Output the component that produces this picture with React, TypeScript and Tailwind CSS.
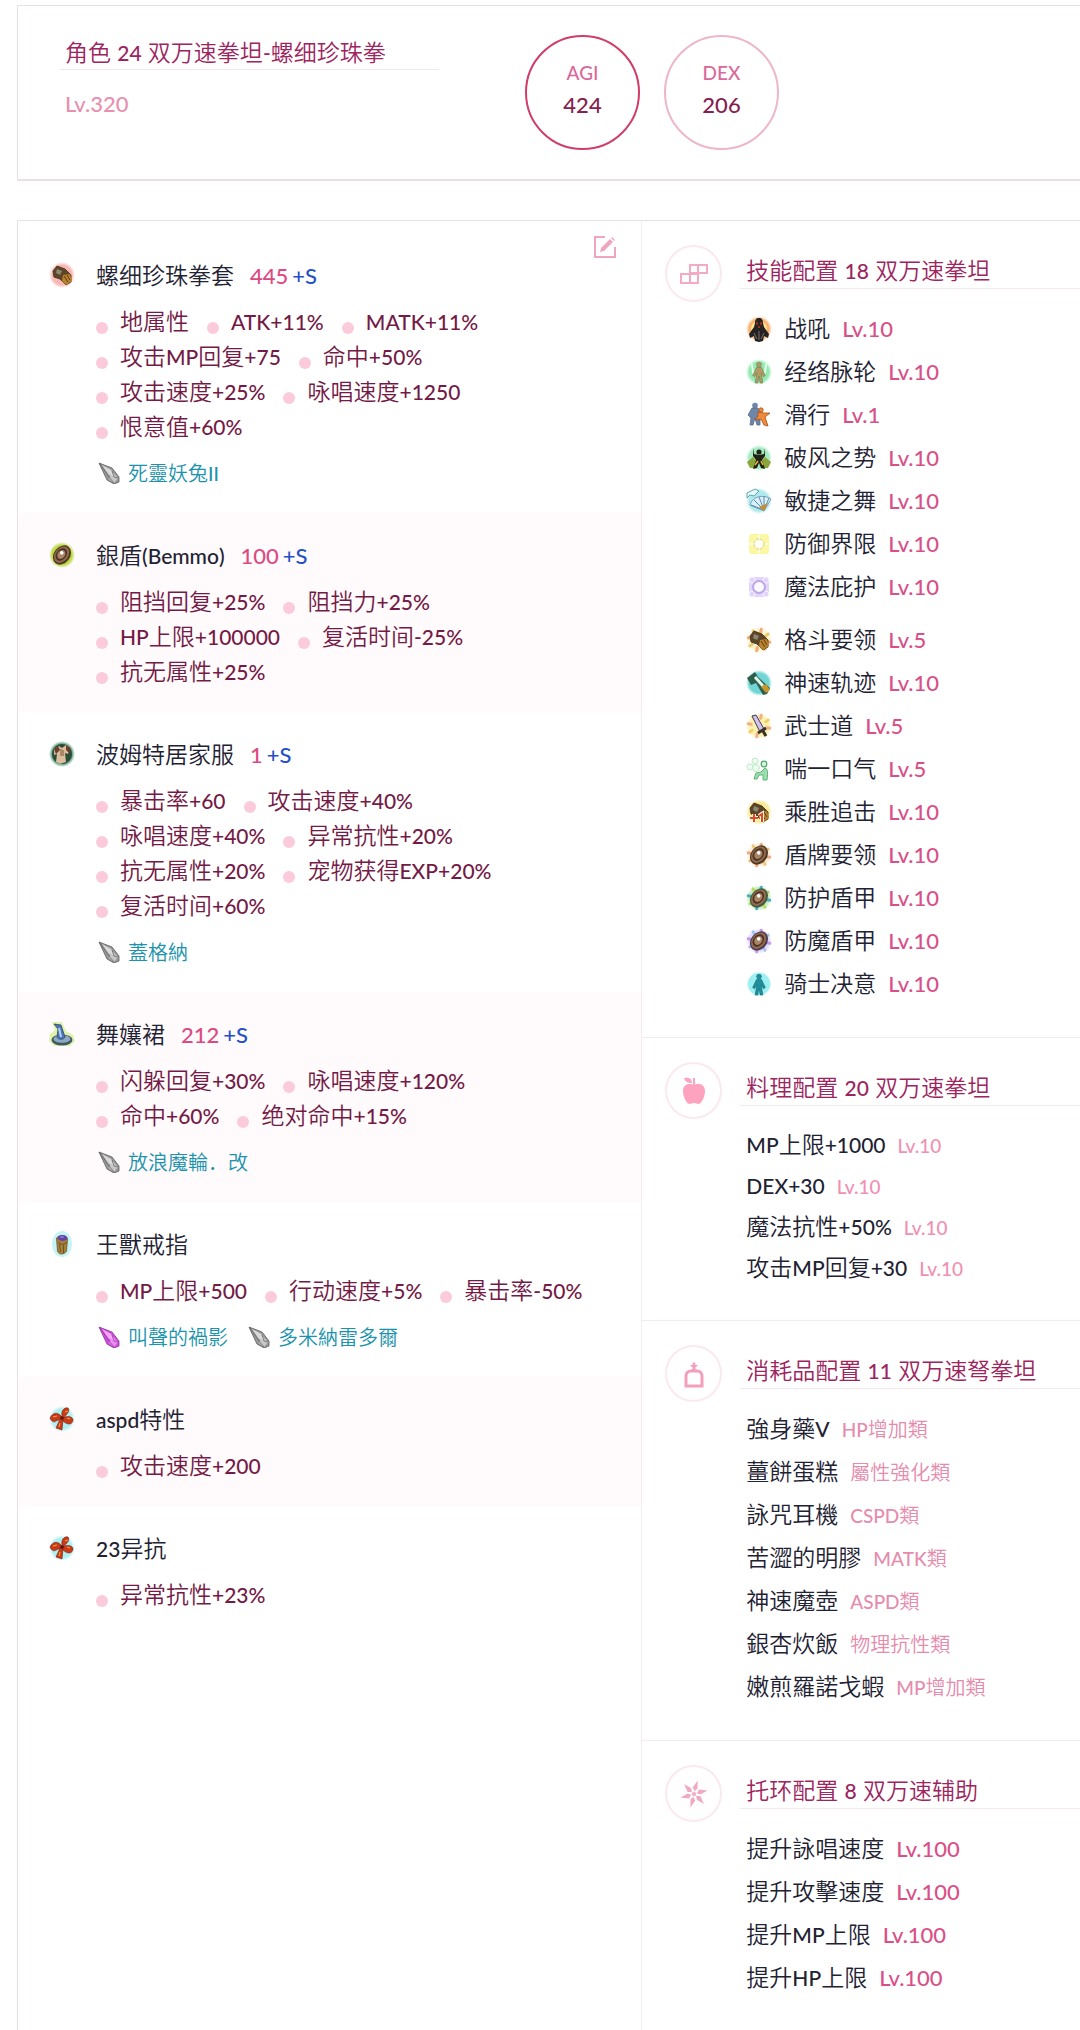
import { Fragment, useId, type ReactNode } from 'react'

type Stat = { label: string; value: number; main?: boolean }
type Crysta = { name: string; tone: 'gray' | 'purple' }
type Equipment = {
  icon: ReactNode
  name: string
  base?: string
  stats: string[]
  crystas?: Crysta[]
}
type Skill = { icon: ReactNode; name: string; level: number }

function Glow({ color, r = 13 }: { color: string; r?: number }) {
  const id = useId()
  return (
    <>
      <radialGradient id={id}>
        <stop offset="0.75" stopColor={color} stopOpacity="0.9" />
        <stop offset="1" stopColor={color} stopOpacity="0" />
      </radialGradient>
      <circle cx="13" cy="13" r={r} fill={`url(#${id})`} />
    </>
  )
}

function Sprite({ children }: { children: ReactNode }) {
  return (
    <svg viewBox="0 0 26 26" className="size-[26px] shrink-0" aria-hidden="true">
      {children}
    </svg>
  )
}

function Rays({ color, alt }: { color: string; alt: string }) {
  return (
    <g strokeWidth="3" strokeLinecap="round">
      {[0, 45, 90, 135, 180, 225, 270, 315].map((deg, i) => (
        <path
          key={deg}
          d="M13 5V2"
          stroke={i % 2 ? alt : color}
          transform={`rotate(${deg + 12} 13 13)`}
        />
      ))}
    </g>
  )
}

function Knuckle() {
  return (
    <g strokeLinejoin="round">
      <path d="M4 9 8 4l8 3 6 6v7l-5 3-6-6-6-2Z" fill="#5d4527" stroke="#3a2c1c" strokeWidth="0.8" />
      <path d="m14 13 7-1 2 7-6 4-4-4Z" fill="#b9822f" />
      <path d="m15 14 4 6M18 13l3 5" stroke="#5f3b12" />
      <path d="m8 7 5 2-2 4-4-2Z" fill="#8c8876" />
    </g>
  )
}

function Shield({ edge = '#4a3a28' }: { edge?: string }) {
  return (
    <g transform="rotate(38 13 13)">
      <ellipse cx="13" cy="13" rx="8" ry="10.5" fill={edge} />
      <ellipse cx="12.5" cy="13" rx="6.6" ry="9" fill="#93694a" />
      <ellipse cx="12.2" cy="13" rx="5" ry="6.8" fill="#4a3325" />
      <ellipse cx="12.2" cy="13" rx="3.6" ry="4.8" fill="#a98566" />
      <circle cx="11.5" cy="11.5" r="1.8" fill="#fff" />
    </g>
  )
}

function Figure({ fill, stroke = 'none' }: { fill: string; stroke?: string }) {
  return (
    <g fill={fill} stroke={stroke} strokeWidth="0.6" strokeLinejoin="round">
      <circle cx="13" cy="5.6" r="2.4" />
      <path d="M10.5 8.5h5l3.8 8-1.8 1.2-2.3-4 1.6 10.3h-2.6L13 17l-1.2 7H9.2l1.6-10.3-2.3 4-1.8-1.2Z" />
    </g>
  )
}

function Bow() {
  return (
    <Sprite>
      <Glow color="#a5eef0" />
      <g fill="#c93a16" stroke="#7d2412" strokeWidth="0.6" strokeLinejoin="round">
        <path d="M13 11C9 6 4 6 1 12c1 3 4 5 6 3l5-2Z" />
        <path d="M13 10c-1-5 2-9 6-8 2 2 0 6-5 10 5-3 10-1 10 2 0 4-5 6-10 1Z" />
        <path d="m11 13-4 9 6 2 1-10Z" />
      </g>
      <path d="m4 11 4-1M16 6l3-1M11 17l-1 4M18 12l3 1" stroke="#f2a552" />
      <circle cx="13" cy="12" r="1.8" fill="#5c130e" />
    </Sprite>
  )
}

function CrystaIcon({ tone }: { tone: Crysta['tone'] }) {
  const [dark, mid, light] =
    tone === 'gray' ? ['#5a5a5a', '#9a9a9a', '#dadada'] : ['#8a3398', '#cf4fdc', '#f5a8fa']
  return (
    <svg viewBox="0 0 22 22" className="size-[22px] shrink-0" aria-hidden="true">
      <path d="M1 1 14 6l7 9v5l-5 2-7-4Z" fill={mid} stroke={dark} strokeWidth="0.8" strokeLinejoin="round" />
      <path d="m4 3 9 5 4 6-6-1Z" fill={light} />
      <path d="m14 10 6 6-4 5-5-4Z" fill={light} opacity="0.7" />
      <path d="m2 2 9 13 5 6M14 9l2 6 4 1" stroke={dark} strokeWidth="0.7" fill="none" />
    </svg>
  )
}

const stats: Stat[] = [
  { label: 'AGI', value: 424, main: true },
  { label: 'DEX', value: 206 },
]

const equipments: Equipment[] = [
  {
    icon: (
      <Sprite>
        <Glow color="#f9b0ab" />
        <Knuckle />
      </Sprite>
    ),
    name: '螺细珍珠拳套',
    base: '445',
    stats: ['地属性', 'ATK+11%', 'MATK+11%', '攻击MP回复+75', '命中+50%', '攻击速度+25%', '咏唱速度+1250', '恨意值+60%'],
    crystas: [{ name: '死靈妖兔II', tone: 'gray' }],
  },
  {
    icon: (
      <Sprite>
        <Glow color="#b4d42f" />
        <Shield />
      </Sprite>
    ),
    name: '銀盾(Bemmo)',
    base: '100',
    stats: ['阻挡回复+25%', '阻挡力+25%', 'HP上限+100000', '复活时间-25%', '抗无属性+25%'],
  },
  {
    icon: (
      <Sprite>
        <Glow color="#3c8a66" />
        <circle cx="13" cy="13" r="10" fill="#2c4a38" />
        <path d="m5 8 5-3 3 2 4-3 4 4-2 5-3-1 1 9-6 2-4-2 1-8-3 1Z" fill="#d9bd9c" />
        <path d="m5 8 4-3 2 4-4 4ZM17 4l5 4-2 4-3-3Z" fill="#6b3f2a" />
        <path d="M12 8v7M14 9v6" stroke="#7d5138" />
      </Sprite>
    ),
    name: '波姆特居家服',
    base: '1',
    stats: ['暴击率+60', '攻击速度+40%', '咏唱速度+40%', '异常抗性+20%', '抗无属性+20%', '宠物获得EXP+20%', '复活时间+60%'],
    crystas: [{ name: '蓋格納', tone: 'gray' }],
  },
  {
    icon: (
      <Sprite>
        <path d="M3 1h10l4 9 7 4 2 6-5 5H5l-5-5 1-7 5-4Z" fill="#d7ef9a" opacity="0.8" />
        <ellipse cx="13" cy="19" rx="10.5" ry="5.5" fill="#3d5a60" />
        <ellipse cx="13" cy="18" rx="8.5" ry="3.8" fill="#8fa9c4" />
        <path d="M5 3 12 4l4 12c-1 3-7 3-8 0l1-8Z" fill="#4a74c0" stroke="#2c4a58" strokeWidth="0.8" />
        <path d="m10 7 2 9" stroke="#b6d2f4" strokeWidth="2" />
      </Sprite>
    ),
    name: '舞孃裙',
    base: '212',
    stats: ['闪躲回复+30%', '咏唱速度+120%', '命中+60%', '绝对命中+15%'],
    crystas: [{ name: '放浪魔輪．改', tone: 'gray' }],
  },
  {
    icon: (
      <Sprite>
        <ellipse cx="13" cy="13" rx="10" ry="13" fill="#c6f3f4" />
        <path d="M7.5 7c4-4 9-3 11 1l-1 12c-2 4-8 4-9 0Z" fill="#a8803a" stroke="#6c5228" strokeWidth="0.8" />
        <ellipse cx="13.5" cy="7" rx="5" ry="3" fill="#6145a6" />
        <path d="M11 6h4" stroke="#a993e0" />
        <path d="M9 11c3 3 6 3 9 0M10.5 13l1 8M14.5 14v8" stroke="#6b5423" fill="none" />
      </Sprite>
    ),
    name: '王獸戒指',
    stats: ['MP上限+500', '行动速度+5%', '暴击率-50%'],
    crystas: [
      { name: '叫聲的禍影', tone: 'purple' },
      { name: '多米納雷多爾', tone: 'gray' },
    ],
  },
  { icon: <Bow />, name: 'aspd特性', stats: ['攻击速度+200'] },
  { icon: <Bow />, name: '23异抗', stats: ['异常抗性+23%'] },
]

const skillGroups: Skill[][] = [
  [
    {
      icon: (
        <Sprite>
          <Glow color="#f7a860" />
          <circle cx="13" cy="13" r="8" fill="#ffe88a" />
          <path d="M13 2c3 0 4 2 4 5l1 4 5 7-1 4-4-2-1 5-4 1-4-1-1-5-4 2-1-4 5-7 1-4c0-3 1-5 4-5Z" fill="#252322" />
          <path d="M11 6v3M15 6v3M12 11h2" stroke="#b8361c" strokeWidth="1.4" />
          <path d="m8 17 3 6M18 17l-3 6M13 15v9" stroke="#8a8680" strokeWidth="0.8" />
        </Sprite>
      ),
      name: '战吼',
      level: 10,
    },
    {
      icon: (
        <Sprite>
          <Glow color="#86e8a8" />
          <path d="M5 3c2 4 1 9 3 13M21 3c-2 4-1 9-3 13" stroke="#e3ffe9" strokeWidth="2" fill="none" />
          <Figure fill="#b59a66" stroke="#6f7a48" />
        </Sprite>
      ),
      name: '经络脉轮',
      level: 10,
    },
    {
      icon: (
        <Sprite>
          <circle cx="9" cy="3.5" r="2.8" fill="#6f86a8" />
          <path d="M6 6h6l2 9v8h-3l-2-7-2 7H4l1-7-3-3Z" fill="#6f86a8" stroke="#57698a" strokeWidth="0.8" />
          <circle cx="15" cy="8" r="2.2" fill="#ef8a3a" stroke="#a84c14" strokeWidth="0.8" />
          <path d="m12 10 6 1h6l-5 4 3 9-4-1-3-6-6 1 3-4Z" fill="#ef8a3a" stroke="#a84c14" strokeWidth="0.8" />
        </Sprite>
      ),
      name: '滑行',
      level: 1,
    },
    {
      icon: (
        <Sprite>
          <Glow color="#9be8bb" />
          <path d="m1 17 6-5 3 4-1 7H4ZM25 17l-6-5-3 4 1 7h5Z" fill="#8aa63a" />
          <circle cx="13" cy="7" r="2.6" fill="#1f2314" />
          <path d="m7 3 1 6 5 1 5-1 1-6v8l-3 4 3 9-4-1-2-5-2 5-4 1 3-9-3-4Z" fill="#1f2314" />
          <path d="m9 20 3-4M15 16l2 4" stroke="#e8b43a" strokeWidth="1.6" />
        </Sprite>
      ),
      name: '破风之势',
      level: 10,
    },
    {
      icon: (
        <Sprite>
          <Glow color="#a5e8ea" />
          <path d="m1 5 8-4 4 2-5 5-4-1-3 3Z" fill="#e6fafa" stroke="#3c8ea1" strokeWidth="0.8" />
          <path d="M4 17C6 8 18 6 25 11l-7 12Z" fill="#d8f0fa" stroke="#6791a6" strokeWidth="0.8" />
          <path d="m18 22-13-5M18 22 8 12M18 22 13 9M18 22V8M18 22l5-12" stroke="#4f80a0" strokeWidth="0.9" />
          <path d="m13 19 9-4-4 8Z" fill="#c58d35" />
        </Sprite>
      ),
      name: '敏捷之舞',
      level: 10,
    },
    {
      icon: (
        <Sprite>
          <rect x="3" y="3" width="20" height="20" rx="3" fill="#fbf8a4" />
          <path d="M4 13h3M19 13h3M13 4v3M13 19v3" stroke="#fffde0" strokeWidth="2" />
          <circle cx="13" cy="13" r="5" fill="#fffffa" stroke="#ddd37a" strokeDasharray="3 1" />
        </Sprite>
      ),
      name: '防御界限',
      level: 10,
    },
    {
      icon: (
        <Sprite>
          <rect x="3" y="3" width="20" height="20" rx="4" fill="#e2d5fb" />
          <g fill="none" stroke="#f8f3ff">
            <circle cx="6" cy="6" r="3" />
            <circle cx="20" cy="6" r="3" />
            <circle cx="6" cy="20" r="3" />
            <circle cx="20" cy="20" r="3" />
          </g>
          <circle cx="13" cy="13" r="6" fill="#fbf8ff" stroke="#bda6ea" strokeWidth="2" />
        </Sprite>
      ),
      name: '魔法庇护',
      level: 10,
    },
  ],
  [
    {
      icon: (
        <Sprite>
          <Glow color="#fcf0c4" />
          <Rays color="#f3ab72" alt="#edc968" />
          <Knuckle />
        </Sprite>
      ),
      name: '格斗要领',
      level: 5,
    },
    {
      icon: (
        <Sprite>
          <Glow color="#5fd0d0" />
          <path d="m1 8 8-6 3 5 12 11-3 6-4 1-7-12-5 2Z" fill="#2e5f4c" />
          <path d="m9 7 8 9" stroke="#dff5ee" strokeWidth="3" />
          <path d="m15 17 5-3 4 6-4 3Z" fill="#c9962a" />
        </Sprite>
      ),
      name: '神速轨迹',
      level: 10,
    },
    {
      icon: (
        <Sprite>
          <Glow color="#fcefa8" />
          <Rays color="#f0b08a" alt="#efd26a" />
          <path d="m6 3 4-1 8 14-4 3Z" fill="#d3c2ea" stroke="#433a57" />
          <path d="m12 20 8-5M17 18l3 5" stroke="#3a3226" strokeWidth="3" />
        </Sprite>
      ),
      name: '武士道',
      level: 5,
    },
    {
      icon: (
        <Sprite>
          <g fill="#effcf1" stroke="#bcecc6">
            <circle cx="9" cy="5" r="3" />
            <circle cx="4" cy="11" r="3" />
            <circle cx="10" cy="12" r="3.5" />
          </g>
          <circle cx="18" cy="8" r="2.8" fill="#d3f6dc" stroke="#4da56a" strokeWidth="1.2" />
          <path d="M19 12c3 1 3 4 2 12h-4v-5h-4l-2 4H8l2-6 5-1Z" fill="#9cdcae" stroke="#5cb878" />
        </Sprite>
      ),
      name: '喘一口气',
      level: 5,
    },
    {
      icon: (
        <Sprite>
          <Glow color="#f8e88c" />
          <Knuckle />
          <path d="M4 19h8M8 15v8M13 17l3-2v8" stroke="#fff3df" strokeWidth="4" fill="none" />
          <path d="M4 19h8M8 15v8M13 17l3-2v8" stroke="#dd4a24" strokeWidth="2" fill="none" />
        </Sprite>
      ),
      name: '乘胜追击',
      level: 10,
    },
    {
      icon: (
        <Sprite>
          <Glow color="#fcead0" />
          <Rays color="#f3a982" alt="#efc678" />
          <Shield />
        </Sprite>
      ),
      name: '盾牌要领',
      level: 10,
    },
    {
      icon: (
        <Sprite>
          <Glow color="#c2e8b8" />
          <Rays color="#4ab2be" alt="#b3dc62" />
          <Shield edge="#3f5a41" />
        </Sprite>
      ),
      name: '防护盾甲',
      level: 10,
    },
    {
      icon: (
        <Sprite>
          <Glow color="#e2d6f9" />
          <Rays color="#c29cea" alt="#a6c2ee" />
          <Shield edge="#4a3b58" />
        </Sprite>
      ),
      name: '防魔盾甲',
      level: 10,
    },
    {
      icon: (
        <Sprite>
          <circle cx="13" cy="13" r="11.5" fill="#9cf0f2" stroke="#d2f9f9" />
          <Figure fill="#1f8f9c" stroke="#146a78" />
        </Sprite>
      ),
      name: '骑士决意',
      level: 10,
    },
  ],
]

const foods = ['MP上限+1000', 'DEX+30', '魔法抗性+50%', '攻击MP回复+30']

const consumables = [
  ['強身藥V', 'HP增加類'],
  ['薑餅蛋糕', '屬性強化類'],
  ['詠咒耳機', 'CSPD類'],
  ['苦澀的明膠', 'MATK類'],
  ['神速魔壺', 'ASPD類'],
  ['銀杏炊飯', '物理抗性類'],
  ['嫩煎羅諾戈蝦', 'MP增加類'],
]

const registlets = ['提升詠唱速度', '提升攻擊速度', '提升MP上限', '提升HP上限']

// Latin runs are set a little smaller and heavier than the surrounding CJK glyphs.
function Mixed({ text, small }: { text: string; small?: boolean }) {
  return text.split(/([!-~]+)/).map((part, i) =>
    i % 2 ? (
      <span key={i} className={`leading-none font-medium ${small ? 'text-[19px]' : 'text-[21px]'}`}>
        {part}
      </span>
    ) : (
      <Fragment key={i}>{part}</Fragment>
    ),
  )
}

function EquipmentItem({ icon, name, base, stats, crystas }: Equipment) {
  return (
    <li className="flex pt-[23px] pr-12 pb-[23px] pl-[31px] even:bg-[#fffafb]">
      <div className="flex h-[38px] w-[47px] shrink-0 items-center">{icon}</div>
      <div className="min-w-0 flex-1">
        <h3 className="flex h-[38px] items-center text-[#1e2233]">
          <span>
            <Mixed text={name} />
          </span>
          {base && (
            <>
              <span className="ml-4 text-[22px] font-medium text-[#dc4a82]">{base}</span>
              <span className="ml-1 text-[22px] font-medium text-[#2450c8]">+S</span>
            </>
          )}
        </h3>
        <ul className="mt-[10px] flex flex-wrap gap-x-[18px] leading-[35px] text-[#741a46]">
          {stats.map((stat) => (
            <li key={stat} className="flex items-center whitespace-nowrap">
              <span className="mt-3 mr-3 size-3 rounded-full bg-[#fbcbdc]" />
              <span>
                <Mixed text={stat} />
              </span>
            </li>
          ))}
        </ul>
        {crystas && (
          <ul className="mt-3 flex gap-5 pl-[2px] text-xl leading-[34px] text-[#1c93ac]">
            {crystas.map(({ name, tone }) => (
              <li key={name} className="flex items-center gap-2">
                <CrystaIcon tone={tone} />
                <span>
                  <Mixed text={name} small />
                </span>
              </li>
            ))}
          </ul>
        )}
      </div>
    </li>
  )
}

function Section({ icon, title, children }: { icon: ReactNode; title: string; children: ReactNode }) {
  return (
    <section className="flex gap-[18px] border-b border-[#f2ecef] pt-6 pb-8 pl-[23px]">
      <div className="flex size-[57px] shrink-0 items-center justify-center rounded-full border-2 border-[#fbe9ef]">
        {icon}
      </div>
      <div className="min-w-0 flex-1 pt-[7px]">
        <h2 className="border-b border-[#f2e8ed] pl-[6px] leading-9 text-[#9c2560]">
          <Mixed text={title} />
        </h2>
        <div className="mt-[18px] pl-[6px]">{children}</div>
      </div>
    </section>
  )
}

export default function App() {
  return (
    <div className="overflow-hidden bg-white pt-[5px] pl-[17px] font-['Lato','Noto_Sans_CJK_SC',sans-serif] text-[23px] font-[350] text-[#1e2233]">
      <header className="flex border border-r-0 border-b-2 border-[#ecdfe4] pt-[29px] pb-[29px] pl-[41px]">
        <div className="w-[380px]">
          <h1 className="border-b border-[#f2e8ed] pl-[6px] leading-[34px] text-[#9c2560]">
            <Mixed text="角色 24 双万速拳坦-螺细珍珠拳" />
          </h1>
          <p className="mt-4 pl-[6px] text-[22px] leading-9 font-medium text-[#e790b0]">Lv.320</p>
        </div>
        <ul className="ml-[86px] flex gap-6">
          {stats.map(({ label, value, main }) => (
            <li
              key={label}
              className={`flex size-[115px] flex-col items-center justify-center rounded-full border-2 font-medium ${
                main ? 'border-[#cf3d68]' : 'border-[#edb7c8]'
              }`}
            >
              <span className="text-[19px] leading-8 text-[#d9699a]">{label}</span>
              <span className="mb-2 text-[22px] leading-8 text-[#86204f]">{value}</span>
            </li>
          ))}
        </ul>
      </header>

      <main className="mt-[39px] grid grid-cols-[minmax(0,27fr)_minmax(0,19fr)] border border-r-0 border-[#ecdfe4]">
        <div className="relative pt-3">
          <button type="button" aria-label="编辑" className="absolute top-[14px] right-6 text-[#f0a5bf]">
            <svg viewBox="0 0 24 24" className="size-6" fill="none" stroke="currentColor" strokeWidth="2">
              <path d="M12 2H2v20h20V12" />
              <path d="m7 17 1-4 9-9 3 3-9 9Z" fill="currentColor" stroke="none" />
              <path d="m18 3 1-1 3 3-1 1Z" fill="currentColor" stroke="none" />
            </svg>
          </button>
          <ul>
            {equipments.map((item) => (
              <EquipmentItem key={item.name} {...item} />
            ))}
          </ul>
        </div>

        <div className="border-l border-[#f2ecef]">
          <Section
            title="技能配置 18 双万速拳坦"
            icon={
              <svg viewBox="0 0 28 20" className="h-5 w-7" fill="none" stroke="#f3abc4" strokeWidth="2">
                <path d="M10 1h17v8H10ZM1 10h17v9H1ZM10 1v18M18 1v18" />
              </svg>
            }
          >
            {skillGroups.map((group, i) => (
              <ul key={i} className={i > 0 ? 'mt-[10px]' : ''}>
                {group.map(({ icon, name, level }) => (
                  <li key={name} className="flex h-[43px] items-center">
                    {icon}
                    <span className="ml-3">{name}</span>
                    <span className="ml-3 text-[22px] font-medium text-[#d94f88]">Lv.{level}</span>
                  </li>
                ))}
              </ul>
            ))}
          </Section>

          <Section
            title="料理配置 20 双万速拳坦"
            icon={
              <svg viewBox="0 0 24 28" className="h-7 w-6" fill="#fda3bf">
                <path d="M12 8c3-2 11-2 11 6 0 5-3 12-6 13-2 0-3-1-5-1s-3 1-5 1c-3-1-6-8-6-13 0-8 8-8 11-6Z" />
                <path d="M11 8V1h2v7ZM2 1c4-1 8 0 8 5-4 0-7-1-8-5Z" />
              </svg>
            }
          >
            <ul>
              {foods.map((name) => (
                <li key={name} className="leading-[41px]">
                  <Mixed text={name} />
                  <span className="ml-3 text-[19px] leading-none font-medium text-[#f090b2]">Lv.10</span>
                </li>
              ))}
            </ul>
          </Section>

          <Section
            title="消耗品配置 11 双万速弩拳坦"
            icon={
              <svg viewBox="0 0 20 28" className="h-7 w-5" fill="none" stroke="#f3a0bc" strokeWidth="3">
                <path d="M2 26V16c0-3 2-5 5-5h6c3 0 5 2 5 5v10Z" />
                <path d="M7 10 9 8 6 5h3a1.500 1.500 0 1 1 2 0h3l-3 3 2 2Z" fill="#f3a0bc" stroke="none" />
              </svg>
            }
          >
            <ul>
              {consumables.map(([name, category]) => (
                <li key={name} className="flex h-[43px] items-center">
                  <span>
                    <Mixed text={name} />
                  </span>
                  <span className="ml-3 text-xl text-[#e58cad]">
                    <Mixed text={category} small />
                  </span>
                </li>
              ))}
            </ul>
          </Section>

          <Section
            title="托环配置 8 双万速辅助"
            icon={
              <svg viewBox="0 0 28 28" className="size-7" fill="#f0a9c0">
                {[0, 60, 120, 180, 240, 300].map((deg) => (
                  <g key={deg} transform={`rotate(${deg + 15} 14 14)`}>
                    <path d="m14 0 2 8-2 3-3-3Z" />
                    <path d="m14 11 2 3h-4Z" opacity="0.6" />
                  </g>
                ))}
              </svg>
            }
          >
            <ul>
              {registlets.map((name) => (
                <li key={name} className="leading-[43px]">
                  <Mixed text={name} />
                  <span className="ml-3 text-[22px] leading-none font-medium text-[#d94f88]">Lv.100</span>
                </li>
              ))}
            </ul>
          </Section>
        </div>
      </main>
    </div>
  )
}
